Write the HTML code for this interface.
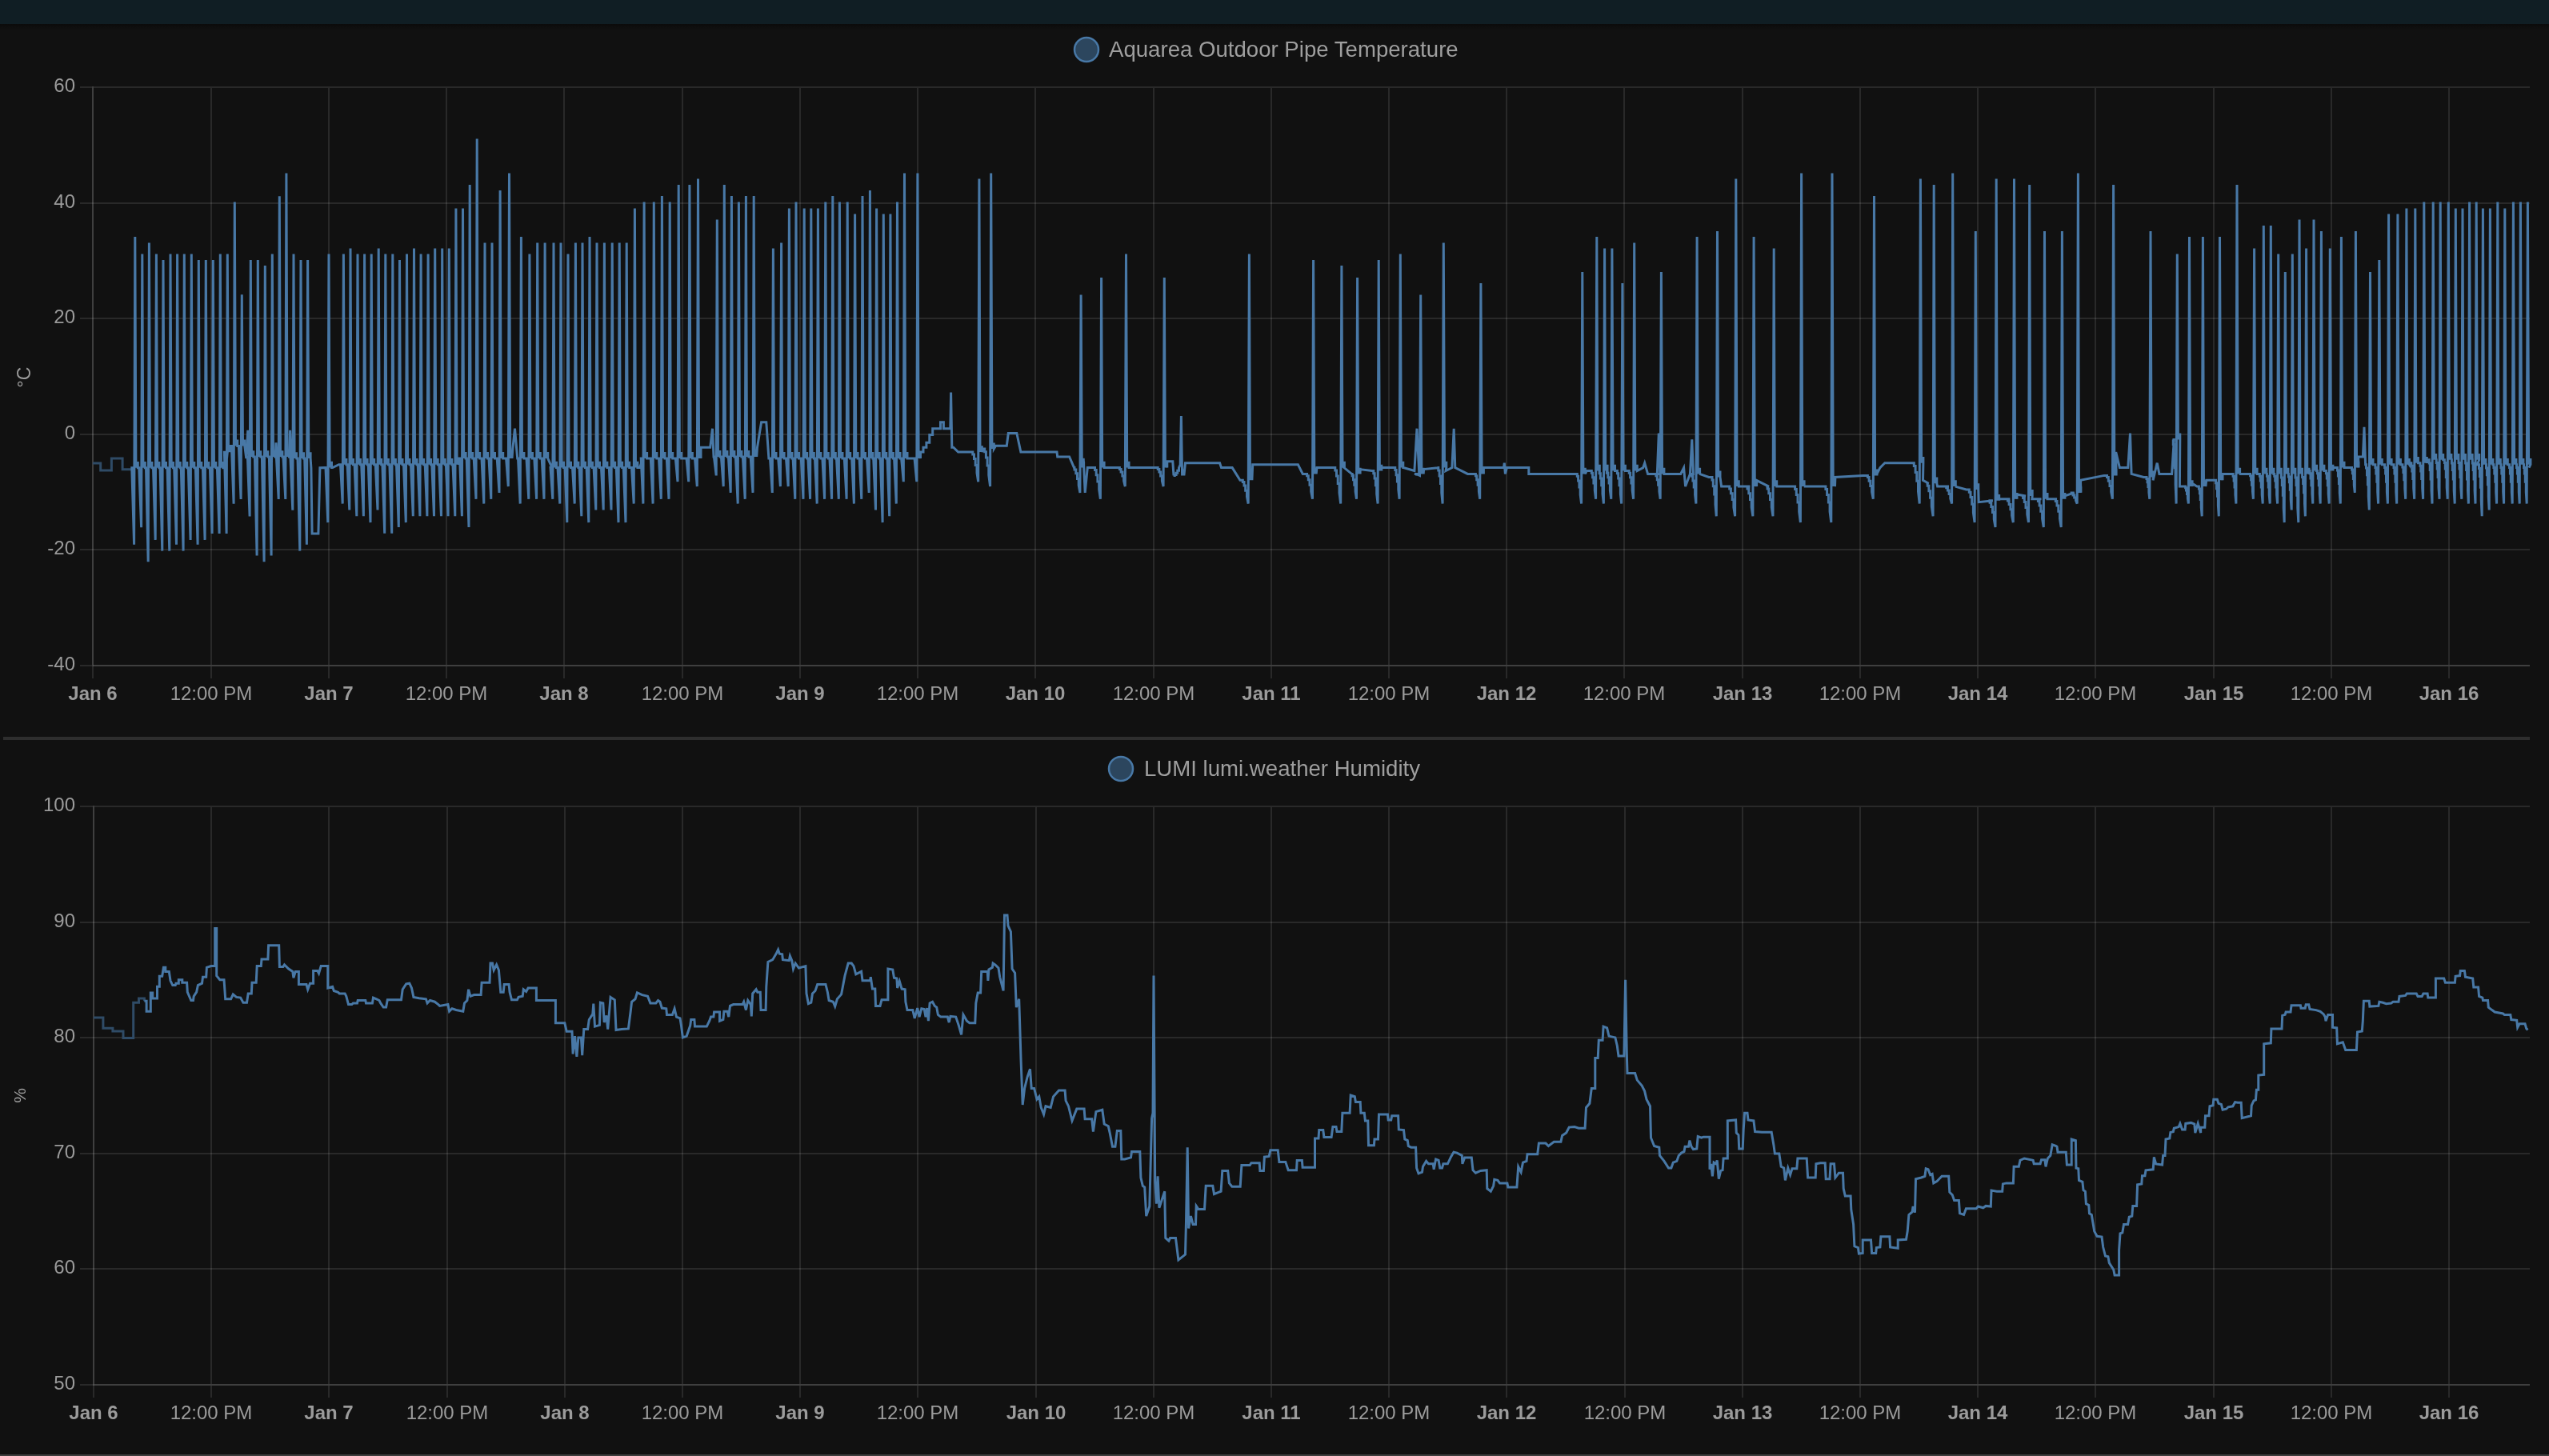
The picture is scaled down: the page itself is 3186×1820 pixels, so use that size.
<!DOCTYPE html>
<html><head><meta charset="utf-8"><style>
html,body{margin:0;padding:0;background:#111111;width:3186px;height:1820px;overflow:hidden}
svg{display:block;will-change:transform}
text{font-family:"Liberation Sans",sans-serif;fill:#9b9b9b}
.yl{font-size:24px}
.xn{font-size:24px}
.xb{font-size:24px;font-weight:bold}
.tt{font-size:27.6px;fill:#9e9e9e}
</style></head><body>
<svg width="3186" height="1820" viewBox="0 0 3186 1820">
<rect x="0" y="0" width="3186" height="1820" fill="#111111"/>
<defs><linearGradient id="sh" x1="0" y1="0" x2="0" y2="1"><stop offset="0" stop-color="#0b0b0b"/><stop offset="1" stop-color="#111111"/></linearGradient></defs>
<rect x="0" y="30" width="3186" height="8" fill="url(#sh)"/>
<rect x="0" y="0" width="3186" height="30" fill="#101e24"/>
<rect x="100" y="108" width="3062" height="2" fill="rgba(225,225,225,0.12)"/>
<text x="94" y="115.0" text-anchor="end" class="yl">60</text>
<rect x="100" y="253" width="3062" height="2" fill="rgba(225,225,225,0.12)"/>
<text x="94" y="260.0" text-anchor="end" class="yl">40</text>
<rect x="100" y="397" width="3062" height="2" fill="rgba(225,225,225,0.12)"/>
<text x="94" y="404.0" text-anchor="end" class="yl">20</text>
<rect x="100" y="542" width="3062" height="2" fill="rgba(225,225,225,0.12)"/>
<text x="94" y="549.0" text-anchor="end" class="yl">0</text>
<rect x="100" y="686" width="3062" height="2" fill="rgba(225,225,225,0.12)"/>
<text x="94" y="693.0" text-anchor="end" class="yl">-20</text>
<rect x="100" y="831" width="3062" height="2" fill="rgba(225,225,225,0.12)"/>
<rect x="116" y="831" width="3046" height="2" fill="rgba(225,225,225,0.12)"/>
<text x="94" y="838.0" text-anchor="end" class="yl">-40</text>
<rect x="115" y="110" width="2" height="721" fill="rgba(225,225,225,0.12)"/>
<rect x="115" y="833" width="2" height="15" fill="rgba(225,225,225,0.12)"/>
<rect x="115" y="108" width="2" height="725" fill="rgba(225,225,225,0.12)"/>
<text x="116.00" y="875.0" text-anchor="middle" class="xb">Jan 6</text>
<rect x="263" y="110" width="2" height="721" fill="rgba(225,225,225,0.12)"/>
<rect x="263" y="833" width="2" height="15" fill="rgba(225,225,225,0.12)"/>
<text x="264.00" y="875.0" text-anchor="middle" class="xn">12:00 PM</text>
<rect x="410" y="110" width="2" height="721" fill="rgba(225,225,225,0.12)"/>
<rect x="410" y="833" width="2" height="15" fill="rgba(225,225,225,0.12)"/>
<text x="411.00" y="875.0" text-anchor="middle" class="xb">Jan 7</text>
<rect x="557" y="110" width="2" height="721" fill="rgba(225,225,225,0.12)"/>
<rect x="557" y="833" width="2" height="15" fill="rgba(225,225,225,0.12)"/>
<text x="558.00" y="875.0" text-anchor="middle" class="xn">12:00 PM</text>
<rect x="704" y="110" width="2" height="721" fill="rgba(225,225,225,0.12)"/>
<rect x="704" y="833" width="2" height="15" fill="rgba(225,225,225,0.12)"/>
<text x="705.00" y="875.0" text-anchor="middle" class="xb">Jan 8</text>
<rect x="852" y="110" width="2" height="721" fill="rgba(225,225,225,0.12)"/>
<rect x="852" y="833" width="2" height="15" fill="rgba(225,225,225,0.12)"/>
<text x="853.00" y="875.0" text-anchor="middle" class="xn">12:00 PM</text>
<rect x="999" y="110" width="2" height="721" fill="rgba(225,225,225,0.12)"/>
<rect x="999" y="833" width="2" height="15" fill="rgba(225,225,225,0.12)"/>
<text x="1000.00" y="875.0" text-anchor="middle" class="xb">Jan 9</text>
<rect x="1146" y="110" width="2" height="721" fill="rgba(225,225,225,0.12)"/>
<rect x="1146" y="833" width="2" height="15" fill="rgba(225,225,225,0.12)"/>
<text x="1147.00" y="875.0" text-anchor="middle" class="xn">12:00 PM</text>
<rect x="1293" y="110" width="2" height="721" fill="rgba(225,225,225,0.12)"/>
<rect x="1293" y="833" width="2" height="15" fill="rgba(225,225,225,0.12)"/>
<text x="1294.00" y="875.0" text-anchor="middle" class="xb">Jan 10</text>
<rect x="1441" y="110" width="2" height="721" fill="rgba(225,225,225,0.12)"/>
<rect x="1441" y="833" width="2" height="15" fill="rgba(225,225,225,0.12)"/>
<text x="1442.00" y="875.0" text-anchor="middle" class="xn">12:00 PM</text>
<rect x="1588" y="110" width="2" height="721" fill="rgba(225,225,225,0.12)"/>
<rect x="1588" y="833" width="2" height="15" fill="rgba(225,225,225,0.12)"/>
<text x="1589.00" y="875.0" text-anchor="middle" class="xb">Jan 11</text>
<rect x="1735" y="110" width="2" height="721" fill="rgba(225,225,225,0.12)"/>
<rect x="1735" y="833" width="2" height="15" fill="rgba(225,225,225,0.12)"/>
<text x="1736.00" y="875.0" text-anchor="middle" class="xn">12:00 PM</text>
<rect x="1882" y="110" width="2" height="721" fill="rgba(225,225,225,0.12)"/>
<rect x="1882" y="833" width="2" height="15" fill="rgba(225,225,225,0.12)"/>
<text x="1883.00" y="875.0" text-anchor="middle" class="xb">Jan 12</text>
<rect x="2029" y="110" width="2" height="721" fill="rgba(225,225,225,0.12)"/>
<rect x="2029" y="833" width="2" height="15" fill="rgba(225,225,225,0.12)"/>
<text x="2030.00" y="875.0" text-anchor="middle" class="xn">12:00 PM</text>
<rect x="2177" y="110" width="2" height="721" fill="rgba(225,225,225,0.12)"/>
<rect x="2177" y="833" width="2" height="15" fill="rgba(225,225,225,0.12)"/>
<text x="2178.00" y="875.0" text-anchor="middle" class="xb">Jan 13</text>
<rect x="2324" y="110" width="2" height="721" fill="rgba(225,225,225,0.12)"/>
<rect x="2324" y="833" width="2" height="15" fill="rgba(225,225,225,0.12)"/>
<text x="2325.00" y="875.0" text-anchor="middle" class="xn">12:00 PM</text>
<rect x="2471" y="110" width="2" height="721" fill="rgba(225,225,225,0.12)"/>
<rect x="2471" y="833" width="2" height="15" fill="rgba(225,225,225,0.12)"/>
<text x="2472.00" y="875.0" text-anchor="middle" class="xb">Jan 14</text>
<rect x="2618" y="110" width="2" height="721" fill="rgba(225,225,225,0.12)"/>
<rect x="2618" y="833" width="2" height="15" fill="rgba(225,225,225,0.12)"/>
<text x="2619.00" y="875.0" text-anchor="middle" class="xn">12:00 PM</text>
<rect x="2766" y="110" width="2" height="721" fill="rgba(225,225,225,0.12)"/>
<rect x="2766" y="833" width="2" height="15" fill="rgba(225,225,225,0.12)"/>
<text x="2767.00" y="875.0" text-anchor="middle" class="xb">Jan 15</text>
<rect x="2913" y="110" width="2" height="721" fill="rgba(225,225,225,0.12)"/>
<rect x="2913" y="833" width="2" height="15" fill="rgba(225,225,225,0.12)"/>
<text x="2914.00" y="875.0" text-anchor="middle" class="xn">12:00 PM</text>
<rect x="3060" y="110" width="2" height="721" fill="rgba(225,225,225,0.12)"/>
<rect x="3060" y="833" width="2" height="15" fill="rgba(225,225,225,0.12)"/>
<text x="3061.00" y="875.0" text-anchor="middle" class="xb">Jan 16</text>
<text transform="translate(38,471.5) rotate(-90)" text-anchor="middle" class="yl" style="font-size:23px">°C</text>
<circle cx="1358" cy="62" r="15" fill="#2c465e" stroke="#4878a6" stroke-width="2.5"/>
<text x="1386" y="71" class="tt">Aquarea Outdoor Pipe Temperature</text>
<rect x="4" y="921" width="3158" height="4" fill="#2e2e2e"/>
<rect x="100" y="1007" width="3062" height="2" fill="rgba(225,225,225,0.12)"/>
<text x="94" y="1014.0" text-anchor="end" class="yl">100</text>
<rect x="100" y="1152" width="3062" height="2" fill="rgba(225,225,225,0.12)"/>
<text x="94" y="1159.0" text-anchor="end" class="yl">90</text>
<rect x="100" y="1296" width="3062" height="2" fill="rgba(225,225,225,0.12)"/>
<text x="94" y="1303.0" text-anchor="end" class="yl">80</text>
<rect x="100" y="1441" width="3062" height="2" fill="rgba(225,225,225,0.12)"/>
<text x="94" y="1448.0" text-anchor="end" class="yl">70</text>
<rect x="100" y="1585" width="3062" height="2" fill="rgba(225,225,225,0.12)"/>
<text x="94" y="1592.0" text-anchor="end" class="yl">60</text>
<rect x="100" y="1730" width="3062" height="2" fill="rgba(225,225,225,0.12)"/>
<rect x="116" y="1730" width="3046" height="2" fill="rgba(225,225,225,0.12)"/>
<text x="94" y="1737.0" text-anchor="end" class="yl">50</text>
<rect x="116" y="1009" width="2" height="721" fill="rgba(225,225,225,0.12)"/>
<rect x="116" y="1732" width="2" height="15" fill="rgba(225,225,225,0.12)"/>
<rect x="116" y="1007" width="2" height="725" fill="rgba(225,225,225,0.12)"/>
<text x="117.00" y="1774.0" text-anchor="middle" class="xb">Jan 6</text>
<rect x="263" y="1009" width="2" height="721" fill="rgba(225,225,225,0.12)"/>
<rect x="263" y="1732" width="2" height="15" fill="rgba(225,225,225,0.12)"/>
<text x="264.00" y="1774.0" text-anchor="middle" class="xn">12:00 PM</text>
<rect x="410" y="1009" width="2" height="721" fill="rgba(225,225,225,0.12)"/>
<rect x="410" y="1732" width="2" height="15" fill="rgba(225,225,225,0.12)"/>
<text x="411.00" y="1774.0" text-anchor="middle" class="xb">Jan 7</text>
<rect x="558" y="1009" width="2" height="721" fill="rgba(225,225,225,0.12)"/>
<rect x="558" y="1732" width="2" height="15" fill="rgba(225,225,225,0.12)"/>
<text x="559.00" y="1774.0" text-anchor="middle" class="xn">12:00 PM</text>
<rect x="705" y="1009" width="2" height="721" fill="rgba(225,225,225,0.12)"/>
<rect x="705" y="1732" width="2" height="15" fill="rgba(225,225,225,0.12)"/>
<text x="706.00" y="1774.0" text-anchor="middle" class="xb">Jan 8</text>
<rect x="852" y="1009" width="2" height="721" fill="rgba(225,225,225,0.12)"/>
<rect x="852" y="1732" width="2" height="15" fill="rgba(225,225,225,0.12)"/>
<text x="853.00" y="1774.0" text-anchor="middle" class="xn">12:00 PM</text>
<rect x="999" y="1009" width="2" height="721" fill="rgba(225,225,225,0.12)"/>
<rect x="999" y="1732" width="2" height="15" fill="rgba(225,225,225,0.12)"/>
<text x="1000.00" y="1774.0" text-anchor="middle" class="xb">Jan 9</text>
<rect x="1146" y="1009" width="2" height="721" fill="rgba(225,225,225,0.12)"/>
<rect x="1146" y="1732" width="2" height="15" fill="rgba(225,225,225,0.12)"/>
<text x="1147.00" y="1774.0" text-anchor="middle" class="xn">12:00 PM</text>
<rect x="1294" y="1009" width="2" height="721" fill="rgba(225,225,225,0.12)"/>
<rect x="1294" y="1732" width="2" height="15" fill="rgba(225,225,225,0.12)"/>
<text x="1295.00" y="1774.0" text-anchor="middle" class="xb">Jan 10</text>
<rect x="1441" y="1009" width="2" height="721" fill="rgba(225,225,225,0.12)"/>
<rect x="1441" y="1732" width="2" height="15" fill="rgba(225,225,225,0.12)"/>
<text x="1442.00" y="1774.0" text-anchor="middle" class="xn">12:00 PM</text>
<rect x="1588" y="1009" width="2" height="721" fill="rgba(225,225,225,0.12)"/>
<rect x="1588" y="1732" width="2" height="15" fill="rgba(225,225,225,0.12)"/>
<text x="1589.00" y="1774.0" text-anchor="middle" class="xb">Jan 11</text>
<rect x="1735" y="1009" width="2" height="721" fill="rgba(225,225,225,0.12)"/>
<rect x="1735" y="1732" width="2" height="15" fill="rgba(225,225,225,0.12)"/>
<text x="1736.00" y="1774.0" text-anchor="middle" class="xn">12:00 PM</text>
<rect x="1882" y="1009" width="2" height="721" fill="rgba(225,225,225,0.12)"/>
<rect x="1882" y="1732" width="2" height="15" fill="rgba(225,225,225,0.12)"/>
<text x="1883.00" y="1774.0" text-anchor="middle" class="xb">Jan 12</text>
<rect x="2030" y="1009" width="2" height="721" fill="rgba(225,225,225,0.12)"/>
<rect x="2030" y="1732" width="2" height="15" fill="rgba(225,225,225,0.12)"/>
<text x="2031.00" y="1774.0" text-anchor="middle" class="xn">12:00 PM</text>
<rect x="2177" y="1009" width="2" height="721" fill="rgba(225,225,225,0.12)"/>
<rect x="2177" y="1732" width="2" height="15" fill="rgba(225,225,225,0.12)"/>
<text x="2178.00" y="1774.0" text-anchor="middle" class="xb">Jan 13</text>
<rect x="2324" y="1009" width="2" height="721" fill="rgba(225,225,225,0.12)"/>
<rect x="2324" y="1732" width="2" height="15" fill="rgba(225,225,225,0.12)"/>
<text x="2325.00" y="1774.0" text-anchor="middle" class="xn">12:00 PM</text>
<rect x="2471" y="1009" width="2" height="721" fill="rgba(225,225,225,0.12)"/>
<rect x="2471" y="1732" width="2" height="15" fill="rgba(225,225,225,0.12)"/>
<text x="2472.00" y="1774.0" text-anchor="middle" class="xb">Jan 14</text>
<rect x="2618" y="1009" width="2" height="721" fill="rgba(225,225,225,0.12)"/>
<rect x="2618" y="1732" width="2" height="15" fill="rgba(225,225,225,0.12)"/>
<text x="2619.00" y="1774.0" text-anchor="middle" class="xn">12:00 PM</text>
<rect x="2766" y="1009" width="2" height="721" fill="rgba(225,225,225,0.12)"/>
<rect x="2766" y="1732" width="2" height="15" fill="rgba(225,225,225,0.12)"/>
<text x="2767.00" y="1774.0" text-anchor="middle" class="xb">Jan 15</text>
<rect x="2913" y="1009" width="2" height="721" fill="rgba(225,225,225,0.12)"/>
<rect x="2913" y="1732" width="2" height="15" fill="rgba(225,225,225,0.12)"/>
<text x="2914.00" y="1774.0" text-anchor="middle" class="xn">12:00 PM</text>
<rect x="3060" y="1009" width="2" height="721" fill="rgba(225,225,225,0.12)"/>
<rect x="3060" y="1732" width="2" height="15" fill="rgba(225,225,225,0.12)"/>
<text x="3061.00" y="1774.0" text-anchor="middle" class="xb">Jan 16</text>
<text transform="translate(32,1369.5) rotate(-90)" text-anchor="middle" class="yl" style="font-size:21px">%</text>
<circle cx="1401" cy="961" r="15" fill="#2c465e" stroke="#4878a6" stroke-width="2.5"/>
<text x="1430" y="970" class="tt">LUMI lumi.weather Humidity</text>
<rect x="0" y="1818" width="3186" height="2" fill="#3d3d3d"/>
<path d="M115.9 578.9 L125.7 578.9 L125.7 587.9 L139.4 587.9 L139.4 573.0 L153.1 573.0 L153.1 586.7 L164.8 586.7" fill="none" stroke="#2f4b66" stroke-width="3" stroke-linejoin="miter"/>
<path d="M164.8 586.7 L166.0 584.8 L164.8 584.8 L167.6 680.7 L168.8 296.1 L169.9 584.8 L169.9 578.5 L172.3 578.5 L172.3 584.8 L173.8 584.8 L176.6 659.2 L177.8 317.6 L178.9 584.8 L178.9 578.5 L181.3 578.5 L181.3 584.8 L182.5 584.8 L185.2 702.3 L186.4 303.5 L187.6 584.8 L187.6 578.5 L189.9 578.5 L189.9 584.8 L191.5 584.8 L194.2 674.9 L195.4 317.6 L196.6 584.8 L196.6 578.5 L198.9 578.5 L198.9 584.8 L200.1 584.8 L202.8 688.6 L204.0 325.1 L205.2 584.8 L205.2 578.5 L207.5 578.5 L207.5 584.8 L209.1 584.8 L211.8 688.6 L213.0 317.6 L214.2 584.8 L214.2 578.5 L216.5 578.5 L216.5 584.8 L217.7 584.8 L220.5 680.7 L221.6 317.6 L222.8 584.8 L222.8 578.5 L225.2 578.5 L225.2 584.8 L226.3 584.8 L229.1 688.6 L230.3 317.6 L231.4 584.8 L231.4 578.5 L233.8 578.5 L233.8 584.8 L235.3 584.8 L238.1 674.9 L239.3 317.6 L240.4 584.8 L240.4 578.5 L242.8 578.5 L242.8 584.8 L244.4 584.8 L247.1 680.7 L248.3 325.1 L249.4 584.8 L249.4 578.5 L251.8 578.5 L251.8 584.8 L253.4 584.8 L256.1 674.9 L257.3 325.1 L258.5 584.8 L258.5 578.5 L260.8 578.5 L260.8 584.8 L262.4 584.8 L265.1 667.0 L266.3 325.1 L267.5 584.8 L267.5 578.5 L269.8 578.5 L269.8 584.8 L271.4 584.8 L274.1 667.0 L275.3 317.6 L276.5 584.8 L276.5 578.5 L278.8 578.5 L278.8 584.8 L282.3 584.8 L284.3 565.2 L280.4 565.2 L283.1 667.0 L284.3 317.6 L285.5 565.2 L285.5 558.9 L287.8 558.9 L287.8 565.2 L288.2 557.4 L289.4 557.4 L292.1 629.8 L293.3 252.6 L294.5 557.4 L294.5 551.1 L296.8 551.1 L296.8 557.4 L298.4 557.4 L301.1 624.0 L302.3 368.2 L303.5 557.4 L303.5 551.1 L305.8 551.1 L305.8 557.4 L307.8 573.0 L309.8 537.8 L311.3 571.1 L309.4 571.1 L312.1 645.5 L313.3 325.1 L314.5 571.1 L314.5 564.8 L316.8 564.8 L316.8 571.1 L318.4 571.1 L321.1 694.5 L322.3 325.1 L323.5 571.1 L323.5 564.8 L325.8 564.8 L325.8 571.1 L327.4 571.1 L330.1 702.3 L331.3 332.1 L332.5 571.1 L332.5 564.8 L334.8 564.8 L334.8 571.1 L336.4 571.1 L339.1 694.5 L340.3 317.6 L341.5 571.1 L341.5 564.8 L343.8 564.8 L343.8 571.1 L344.2 571.1 L345.0 553.4 L346.2 571.1 L345.4 571.1 L348.2 624.0 L349.3 245.2 L350.5 571.1 L350.5 564.8 L352.9 564.8 L352.9 571.1 L354.0 571.1 L356.8 624.0 L357.9 216.6 L359.1 571.1 L359.1 564.8 L361.5 564.8 L361.5 571.1 L361.9 571.1 L362.6 537.8 L364.2 573.0 L363.0 573.0 L365.8 637.7 L367.0 317.6 L368.1 573.0 L368.1 566.8 L370.5 566.8 L370.5 573.0 L369.3 573.0 L372.0 573.0 L374.8 688.6 L376.0 325.1 L377.1 573.0 L377.1 566.8 L379.5 566.8 L379.5 573.0 L380.7 573.0 L383.4 680.7 L384.6 325.1 L385.8 573.0 L385.8 566.8 L388.1 566.8 L388.1 573.0 L388.9 584.8 L390.1 667.0 L397.9 667.0 L399.9 584.8 L405.9 584.6 L407.0 584.6 L409.8 653.1 L411.0 317.6 L412.1 584.6 L412.1 578.3 L414.5 578.3 L414.5 584.6 L415.7 584.6 L423.5 580.7 L425.5 580.7 L428.2 629.6 L429.4 317.6 L430.5 580.7 L430.5 574.4 L432.9 574.4 L432.9 580.7 L434.1 580.7 L436.8 637.5 L438.0 310.5 L439.2 580.7 L439.2 574.4 L441.5 574.4 L441.5 580.7 L443.1 580.7 L445.8 645.3 L447.0 317.6 L448.2 580.7 L448.2 574.4 L450.5 574.4 L450.5 580.7 L451.7 580.7 L454.4 645.3 L455.6 317.6 L456.8 580.7 L456.8 574.4 L459.1 574.4 L459.1 580.7 L460.3 580.7 L463.0 653.1 L464.2 317.6 L465.4 580.7 L465.4 574.4 L467.7 574.4 L467.7 580.7 L469.3 580.7 L472.0 637.5 L473.2 310.5 L474.4 580.7 L474.4 574.4 L476.7 574.4 L476.7 580.7 L477.9 580.7 L480.7 666.8 L481.8 317.6 L483.0 580.7 L483.0 574.4 L485.4 574.4 L485.4 580.7 L486.9 580.7 L489.7 666.8 L490.8 317.6 L492.0 580.7 L492.0 574.4 L494.4 574.4 L494.4 580.7 L495.5 580.7 L498.3 659.0 L499.5 325.0 L500.6 580.7 L500.6 574.4 L503.0 574.4 L503.0 580.7 L504.5 580.7 L507.3 653.1 L508.5 317.6 L509.6 580.7 L509.6 574.4 L512.0 574.4 L512.0 580.7 L513.5 580.7 L516.3 645.3 L517.5 310.5 L518.6 580.7 L518.6 574.4 L521.0 574.4 L521.0 580.7 L522.2 580.7 L524.9 645.3 L526.1 317.6 L527.3 580.7 L527.3 574.4 L529.6 574.4 L529.6 580.7 L531.2 580.7 L533.9 645.3 L535.1 317.6 L536.3 580.7 L536.3 574.4 L538.6 574.4 L538.6 580.7 L539.8 580.7 L542.5 645.3 L543.7 310.5 L544.9 580.7 L544.9 574.4 L547.2 574.4 L547.2 580.7 L548.8 580.7 L551.5 645.3 L552.7 310.5 L553.9 580.7 L553.9 574.4 L556.2 574.4 L556.2 580.7 L557.4 580.7 L560.1 645.3 L561.3 310.5 L562.5 580.7 L562.5 574.4 L564.8 574.4 L564.8 580.7 L566.0 580.7 L568.8 645.3 L569.9 260.4 L571.1 580.7 L571.1 574.4 L573.5 574.4 L573.5 580.7 L572.3 572.9 L574.6 572.9 L577.4 645.3 L578.5 260.4 L579.7 572.9 L579.7 566.6 L582.1 566.6 L582.1 572.9 L583.2 572.9 L586.0 659.0 L587.2 231.0 L588.3 572.9 L588.3 566.6 L590.7 566.6 L590.7 572.9 L592.2 572.9 L595.0 623.8 L596.2 173.5 L597.3 572.9 L597.3 566.6 L599.7 566.6 L599.7 572.9 L602.0 572.9 L604.8 629.6 L606.0 303.5 L607.1 572.9 L607.1 566.6 L609.5 566.6 L609.5 572.9 L611.0 572.9 L613.8 623.8 L615.0 303.5 L616.1 572.9 L616.1 566.6 L618.5 566.6 L618.5 572.9 L621.2 572.9 L624.0 615.9 L625.1 238.1 L626.3 572.9 L626.3 566.6 L628.7 566.6 L628.7 572.9 L632.6 572.9 L635.3 608.1 L636.5 216.6 L637.7 572.9 L637.7 566.6 L640.0 566.6 L640.0 572.9 L640.8 561.1 L643.5 535.7 L646.7 572.9 L647.5 572.9 L650.2 629.6 L651.4 296.0 L652.5 572.9 L652.5 566.6 L654.9 566.6 L654.9 572.9 L658.0 572.9 L660.8 623.8 L661.9 317.6 L663.1 572.9 L663.1 566.6 L665.5 566.6 L665.5 572.9 L667.8 572.9 L670.6 623.8 L671.7 303.5 L672.9 572.9 L672.9 566.6 L675.3 566.6 L675.3 572.9 L677.2 572.9 L680.0 623.8 L681.1 303.5 L682.3 572.9 L682.3 566.6 L684.7 566.6 L684.7 572.9 L690.0 584.6 L688.0 584.6 L690.8 623.8 L692.0 303.5 L693.1 584.6 L693.1 578.3 L695.5 578.3 L695.5 584.6 L697.0 584.6 L699.8 629.6 L701.0 303.5 L702.1 584.6 L702.1 578.3 L704.5 578.3 L704.5 584.6 L706.1 584.6 L708.8 653.1 L710.0 317.6 L711.1 584.6 L711.1 578.3 L713.5 578.3 L713.5 584.6 L715.5 584.6 L718.2 629.6 L719.4 303.5 L720.5 584.6 L720.5 578.3 L722.9 578.3 L722.9 584.6 L724.1 584.6 L726.8 645.3 L728.0 303.5 L729.2 584.6 L729.2 578.3 L731.5 578.3 L731.5 584.6 L733.1 584.6 L735.8 653.1 L737.0 296.0 L738.2 584.6 L738.2 578.3 L740.5 578.3 L740.5 584.6 L742.1 584.6 L744.8 637.5 L746.0 303.5 L747.2 584.6 L747.2 578.3 L749.5 578.3 L749.5 584.6 L751.5 584.6 L754.2 637.5 L755.4 303.5 L756.6 584.6 L756.6 578.3 L758.9 578.3 L758.9 584.6 L761.3 584.6 L764.0 637.5 L765.2 303.5 L766.4 584.6 L766.4 578.3 L768.7 578.3 L768.7 584.6 L770.3 584.6 L773.0 653.1 L774.2 303.5 L775.4 584.6 L775.4 578.3 L777.7 578.3 L777.7 584.6 L779.3 584.6 L782.0 653.1 L783.2 303.5 L784.4 584.6 L784.4 578.3 L786.7 578.3 L786.7 584.6 L789.5 584.6 L792.2 629.6 L793.4 260.4 L794.5 584.6 L794.5 578.3 L796.9 578.3 L796.9 584.6 L799.6 584.6 L803.5 572.9 L801.2 572.9 L803.9 629.6 L805.1 252.6 L806.3 572.9 L806.3 566.6 L808.6 566.6 L808.6 572.9 L813.3 572.9 L816.1 629.6 L817.3 252.6 L818.4 572.9 L818.4 566.6 L820.8 566.6 L820.8 572.9 L823.5 572.9 L826.3 623.8 L827.4 245.1 L828.6 572.9 L828.6 566.6 L831.0 566.6 L831.0 572.9 L833.3 572.9 L836.0 623.8 L837.2 252.6 L838.4 572.9 L838.4 566.6 L840.7 566.6 L840.7 572.9 L844.3 572.9 L847.0 602.2 L848.2 231.0 L849.4 572.9 L849.4 566.6 L851.7 566.6 L851.7 572.9 L858.0 572.9 L860.7 602.2 L861.9 231.0 L863.1 572.9 L863.1 566.6 L865.4 566.6 L865.4 572.9 L868.5 572.9 L871.3 608.1 L872.5 223.6 L873.6 572.9 L873.6 566.6 L876.0 566.6 L876.0 572.9 L876.0 559.2 L887.7 559.2 L890.5 535.7 L892.0 570.9 L892.4 570.9 L895.2 594.4 L896.3 274.5 L897.5 570.9 L897.5 564.6 L899.9 564.6 L899.9 570.9 L901.4 570.9 L904.2 608.1 L905.3 231.0 L906.5 570.9 L906.5 564.6 L908.9 564.6 L908.9 570.9 L910.4 570.9 L913.2 615.9 L914.4 245.1 L915.5 570.9 L915.5 564.6 L917.9 564.6 L917.9 570.9 L919.4 570.9 L922.2 629.6 L923.4 252.6 L924.5 570.9 L924.5 564.6 L926.9 564.6 L926.9 570.9 L928.4 570.9 L931.2 623.8 L932.4 245.1 L933.5 570.9 L933.5 564.6 L935.9 564.6 L935.9 570.9 L938.2 570.9 L941.0 615.9 L942.2 245.1 L943.3 570.9 L943.3 564.6 L945.7 564.6 L945.7 570.9 L946.5 559.2 L951.6 527.8 L957.8 527.8 L960.9 572.9 L962.5 572.9 L965.3 615.9 L966.4 310.5 L967.6 572.9 L967.6 566.6 L970.0 566.6 L970.0 572.9 L972.7 572.9 L975.4 608.1 L976.6 303.5 L977.8 572.9 L977.8 566.6 L980.1 566.6 L980.1 572.9 L982.5 572.9 L985.2 608.1 L986.4 260.4 L987.6 572.9 L987.6 566.6 L989.9 566.6 L989.9 572.9 L991.1 572.9 L993.8 623.8 L995.0 252.6 L996.2 572.9 L996.2 566.6 L998.5 566.6 L998.5 572.9 L1001.3 572.9 L1004.0 623.8 L1005.2 260.4 L1006.4 572.9 L1006.4 566.6 L1008.7 566.6 L1008.7 572.9 L1009.9 572.9 L1012.6 623.8 L1013.8 260.4 L1015.0 572.9 L1015.0 566.6 L1017.3 566.6 L1017.3 572.9 L1018.5 572.9 L1021.2 629.6 L1022.4 260.4 L1023.6 572.9 L1023.6 566.6 L1025.9 566.6 L1025.9 572.9 L1027.9 572.9 L1030.6 623.8 L1031.8 252.6 L1033.0 572.9 L1033.0 566.6 L1035.3 566.6 L1035.3 572.9 L1036.9 572.9 L1039.6 623.8 L1040.8 245.1 L1042.0 572.9 L1042.0 566.6 L1044.3 566.6 L1044.3 572.9 L1045.5 572.9 L1048.3 623.8 L1049.4 252.6 L1050.6 572.9 L1050.6 566.6 L1053.0 566.6 L1053.0 572.9 L1055.3 572.9 L1058.1 623.8 L1059.2 252.6 L1060.4 572.9 L1060.4 566.6 L1062.7 566.6 L1062.7 572.9 L1064.7 572.9 L1067.4 629.6 L1068.6 267.5 L1069.8 572.9 L1069.8 566.6 L1072.1 566.6 L1072.1 572.9 L1074.1 572.9 L1076.8 623.8 L1078.0 245.1 L1079.2 572.9 L1079.2 566.6 L1081.5 566.6 L1081.5 572.9 L1083.5 572.9 L1086.2 615.9 L1087.4 238.1 L1088.6 572.9 L1088.6 566.6 L1090.9 566.6 L1090.9 572.9 L1091.7 572.9 L1094.5 637.5 L1095.6 260.4 L1096.8 572.9 L1096.8 566.6 L1099.2 566.6 L1099.2 572.9 L1100.3 572.9 L1103.1 653.1 L1104.3 267.5 L1105.4 572.9 L1105.4 566.6 L1107.8 566.6 L1107.8 572.9 L1109.0 572.9 L1111.7 645.3 L1112.9 267.5 L1114.0 572.9 L1114.0 566.6 L1116.4 566.6 L1116.4 572.9 L1117.6 572.9 L1120.3 629.6 L1121.5 252.6 L1122.7 572.9 L1122.7 566.6 L1125.0 566.6 L1125.0 572.9 L1126.6 572.9 L1129.3 602.2 L1130.5 216.6 L1131.7 572.9 L1131.7 566.6 L1134.0 566.6 L1134.0 572.9 L1143.0 572.9 L1145.8 602.2 L1146.9 216.6 L1148.1 572.9 L1148.1 566.6 L1150.5 566.6 L1150.5 572.9 L1148.9 565.0 L1154.0 565.0 L1154.0 559.2 L1157.9 559.2 L1157.9 553.3 L1161.8 553.3 L1161.8 543.5 L1165.7 543.5 L1165.7 535.7 L1175.5 535.7 L1175.5 527.8 L1179.4 527.8 L1179.4 535.7 L1187.8 535.7 L1188.6 490.6 L1189.8 559.2 L1191.7 559.2 L1197.6 565.0 L1217.2 565.0 L1214.1 565.0 L1215.8 565.0 L1215.8 567.9 L1217.5 567.9 L1217.5 573.6 L1219.2 573.6 L1219.2 581.5 L1221.0 581.5 L1221.0 591.1 L1222.7 602.2 L1223.9 223.6 L1225.0 565.0 L1225.0 558.8 L1227.4 558.8 L1227.4 565.0 L1228.9 561.1 L1228.9 561.1 L1230.7 561.1 L1230.7 564.7 L1232.4 564.7 L1232.4 572.0 L1234.1 572.0 L1234.1 581.9 L1235.8 581.9 L1235.8 594.0 L1237.6 608.1 L1238.7 216.6 L1239.9 561.1 L1239.9 554.9 L1242.3 554.9 L1242.3 561.1 L1244.6 557.2 L1258.3 557.2 L1260.3 541.5 L1270.8 541.5 L1275.9 565.0 L1321.0 565.0 L1321.7 570.9 L1336.6 570.9 L1342.5 584.6 L1341.3 584.6 L1343.0 584.6 L1343.0 587.0 L1344.8 587.0 L1344.8 591.8 L1346.5 591.8 L1346.5 598.4 L1348.2 598.4 L1348.2 606.5 L1349.9 615.9 L1351.1 368.5 L1352.3 584.6 L1352.3 578.3 L1354.6 578.3 L1354.6 584.6 L1354.2 572.9 L1356.2 615.9 L1359.3 584.6 L1367.9 584.6 L1366.8 584.6 L1368.5 584.6 L1368.5 587.6 L1370.2 587.6 L1370.2 593.7 L1371.9 593.7 L1371.9 601.9 L1373.7 601.9 L1373.7 612.0 L1375.4 623.8 L1376.6 346.9 L1377.7 584.6 L1377.7 578.3 L1380.1 578.3 L1380.1 584.6 L1381.6 584.6 L1397.3 584.6 L1397.7 584.6 L1399.4 584.6 L1399.4 586.4 L1401.1 586.4 L1401.1 590.0 L1402.9 590.0 L1402.9 595.0 L1404.6 595.0 L1404.6 601.1 L1406.3 608.1 L1407.5 317.6 L1408.7 584.6 L1408.7 578.3 L1411.0 578.3 L1411.0 584.6 L1411.0 584.6 L1442.3 584.6 L1445.5 584.6 L1447.2 584.6 L1447.2 586.4 L1448.9 586.4 L1448.9 590.0 L1450.6 590.0 L1450.6 595.0 L1452.4 595.0 L1452.4 601.1 L1454.1 608.1 L1455.3 346.9 L1456.4 584.6 L1456.4 578.3 L1458.8 578.3 L1458.8 584.6 L1458.0 576.8 L1465.8 576.8 L1467.0 594.4 L1466.6 594.4 L1468.3 594.4 L1468.3 593.4 L1470.1 593.4 L1470.1 591.2 L1471.8 591.2 L1471.8 588.3 L1473.5 588.3 L1473.5 584.8 L1475.2 580.7 L1476.4 520.0 L1477.6 594.4 L1477.6 588.1 L1479.9 588.1 L1479.9 594.4 L1481.5 578.7 L1524.6 578.7 L1526.5 584.6 L1540.2 584.6 L1550.0 600.3 L1551.6 600.3 L1553.3 600.3 L1553.3 602.5 L1555.0 602.5 L1555.0 607.1 L1556.7 607.1 L1556.7 613.2 L1558.5 613.2 L1558.5 620.8 L1560.2 629.6 L1561.4 317.6 L1562.5 600.3 L1562.5 594.0 L1564.9 594.0 L1564.9 600.3 L1565.7 580.7 L1622.4 580.7 L1628.3 592.4 L1631.8 592.4 L1633.6 592.4 L1633.6 594.8 L1635.3 594.8 L1635.3 599.7 L1637.0 599.7 L1637.0 606.3 L1638.7 606.3 L1638.7 614.4 L1640.5 623.8 L1641.6 325.0 L1642.8 592.4 L1642.8 586.2 L1645.2 586.2 L1645.2 592.4 L1645.9 584.6 L1665.5 584.6 L1667.1 584.6 L1668.8 584.6 L1668.8 588.0 L1670.5 588.0 L1670.5 595.0 L1672.2 595.0 L1672.2 604.5 L1674.0 604.5 L1674.0 616.1 L1675.7 629.6 L1676.9 332.1 L1678.0 584.6 L1678.0 578.3 L1680.4 578.3 L1680.4 584.6 L1680.0 584.6 L1689.6 592.4 L1688.8 592.4 L1690.1 592.4 L1690.1 594.8 L1691.5 594.8 L1691.5 599.7 L1692.8 599.7 L1692.8 606.3 L1694.1 606.3 L1694.1 614.4 L1695.5 623.8 L1696.6 346.9 L1697.8 592.4 L1697.8 586.2 L1700.1 586.2 L1700.1 592.4 L1699.4 586.6 L1715.0 588.5 L1715.4 588.5 L1716.8 588.5 L1716.8 591.7 L1718.1 591.7 L1718.1 598.0 L1719.4 598.0 L1719.4 606.7 L1720.7 606.7 L1720.7 617.3 L1722.1 629.6 L1723.2 325.0 L1724.4 588.5 L1724.4 582.3 L1726.8 582.3 L1726.8 588.5 L1726.8 584.6 L1740.5 584.6 L1742.4 584.6 L1743.8 584.6 L1743.8 587.6 L1745.1 587.6 L1745.1 593.7 L1746.4 593.7 L1746.4 601.9 L1747.8 601.9 L1747.8 612.0 L1749.1 623.8 L1750.3 317.6 L1751.4 584.6 L1751.4 578.3 L1753.8 578.3 L1753.8 584.6 L1754.2 584.6 L1767.9 588.5 L1771.0 535.7 L1773.8 592.4 L1767.9 592.4 L1769.2 592.4 L1769.2 592.6 L1770.5 592.6 L1770.5 592.9 L1771.9 592.9 L1771.9 593.3 L1773.2 593.3 L1773.2 593.8 L1774.5 594.4 L1775.7 368.5 L1776.9 592.4 L1776.9 586.2 L1779.2 586.2 L1779.2 592.4 L1779.6 586.6 L1799.2 584.6 L1796.5 584.6 L1797.8 584.6 L1797.8 588.0 L1799.1 588.0 L1799.1 595.0 L1800.5 595.0 L1800.5 604.5 L1801.8 604.5 L1801.8 616.1 L1803.1 629.6 L1804.3 303.5 L1805.5 584.6 L1805.5 578.3 L1807.8 578.3 L1807.8 584.6 L1807.0 588.5 L1814.9 584.6 L1817.2 535.7 L1818.8 584.6 L1834.4 592.4 L1843.1 592.4 L1844.4 592.4 L1844.4 594.8 L1845.7 594.8 L1845.7 599.7 L1847.1 599.7 L1847.1 606.3 L1848.4 606.3 L1848.4 614.4 L1849.7 623.8 L1850.9 354.0 L1852.1 592.4 L1852.1 586.2 L1854.4 586.2 L1854.4 592.4 L1854.0 584.6 L1879.5 584.6 L1880.3 578.7 L1881.4 592.4 L1883.4 584.6 L1910.8 584.6 L1910.8 592.4 L1971.5 592.4 L1969.9 592.4 L1971.3 592.4 L1971.3 595.3 L1972.6 595.3 L1972.6 601.0 L1973.9 601.0 L1973.9 608.9 L1975.2 608.9 L1975.2 618.5 L1976.6 629.6 L1977.8 339.9 L1978.9 592.4 L1978.9 586.2 L1981.3 586.2 L1981.3 592.4 L1983.2 588.5 L1987.9 588.5 L1989.3 588.5 L1989.3 591.2 L1990.6 591.2 L1990.6 596.7 L1991.9 596.7 L1991.9 604.1 L1993.3 604.1 L1993.3 613.2 L1994.6 623.8 L1995.8 296.0 L1996.9 588.5 L1996.9 582.3 L1999.3 582.3 L1999.3 588.5 L1997.7 588.5 L1999.1 588.5 L1999.1 591.7 L2000.4 591.7 L2000.4 598.0 L2001.7 598.0 L2001.7 606.7 L2003.0 606.7 L2003.0 617.3 L2004.4 629.6 L2005.6 310.5 L2006.7 588.5 L2006.7 582.3 L2009.1 582.3 L2009.1 588.5 L2007.1 588.5 L2008.4 588.5 L2008.4 591.2 L2009.8 591.2 L2009.8 596.7 L2011.1 596.7 L2011.1 604.1 L2012.4 604.1 L2012.4 613.2 L2013.8 623.8 L2014.9 310.5 L2016.1 588.5 L2016.1 582.3 L2018.5 582.3 L2018.5 588.5 L2020.0 588.5 L2021.4 588.5 L2021.4 591.7 L2022.7 591.7 L2022.7 598.0 L2024.0 598.0 L2024.0 606.7 L2025.4 606.7 L2025.4 617.3 L2026.7 629.6 L2027.9 354.0 L2029.0 588.5 L2029.0 582.3 L2031.4 582.3 L2031.4 588.5 L2034.9 588.5 L2036.2 588.5 L2036.2 591.2 L2037.6 591.2 L2037.6 596.7 L2038.9 596.7 L2038.9 604.1 L2040.2 604.1 L2040.2 613.2 L2041.6 623.8 L2042.7 303.5 L2043.9 588.5 L2043.9 582.3 L2046.3 582.3 L2046.3 588.5 L2053.7 584.6 L2055.7 578.7 L2059.6 592.4 L2071.3 592.4 L2073.3 541.5 L2074.9 592.4 L2068.6 592.4 L2069.9 592.4 L2069.9 594.8 L2071.3 594.8 L2071.3 599.7 L2072.6 599.7 L2072.6 606.3 L2073.9 606.3 L2073.9 614.4 L2075.2 623.8 L2076.4 339.9 L2077.6 592.4 L2077.6 586.2 L2079.9 586.2 L2079.9 592.4 L2081.1 592.4 L2100.7 592.4 L2104.6 584.6 L2106.6 608.1 L2112.4 592.4 L2114.8 549.4 L2116.4 592.4 L2113.2 592.4 L2114.6 592.4 L2114.6 595.3 L2115.9 595.3 L2115.9 601.0 L2117.2 601.0 L2117.2 608.9 L2118.6 608.9 L2118.6 618.5 L2119.9 629.6 L2121.1 296.0 L2122.2 592.4 L2122.2 586.2 L2124.6 586.2 L2124.6 592.4 L2124.2 592.4 L2135.9 596.4 L2138.7 596.4 L2140.0 596.4 L2140.0 600.1 L2141.3 600.1 L2141.3 607.7 L2142.7 607.7 L2142.7 618.0 L2144.0 618.0 L2144.0 630.6 L2145.3 645.3 L2146.5 289.0 L2147.7 596.4 L2147.7 590.1 L2150.0 590.1 L2150.0 596.4 L2151.6 608.1 L2160.0 608.1 L2160.0 608.1 L2161.7 608.1 L2161.7 610.9 L2163.4 610.9 L2163.4 616.7 L2165.2 616.7 L2165.2 624.5 L2166.9 624.5 L2166.9 634.1 L2168.6 645.3 L2169.8 223.6 L2171.0 608.1 L2171.0 601.8 L2173.3 601.8 L2173.3 608.1 L2173.7 608.1 L2187.4 608.1 L2182.3 608.1 L2184.0 608.1 L2184.0 610.9 L2185.8 610.9 L2185.8 616.7 L2187.5 616.7 L2187.5 624.5 L2189.2 624.5 L2189.2 634.1 L2190.9 645.3 L2192.1 296.0 L2193.3 608.1 L2193.3 601.8 L2195.6 601.8 L2195.6 608.1 L2195.2 600.3 L2210.9 608.1 L2207.4 608.1 L2209.1 608.1 L2209.1 610.9 L2210.8 610.9 L2210.8 616.7 L2212.5 616.7 L2212.5 624.5 L2214.3 624.5 L2214.3 634.1 L2216.0 645.3 L2217.2 310.5 L2218.3 608.1 L2218.3 601.8 L2220.7 601.8 L2220.7 608.1 L2220.7 608.1 L2242.2 608.1 L2241.8 608.1 L2243.6 608.1 L2243.6 611.5 L2245.3 611.5 L2245.3 618.5 L2247.0 618.5 L2247.0 628.0 L2248.7 628.0 L2248.7 639.6 L2250.4 653.1 L2251.6 216.6 L2252.8 608.1 L2252.8 601.8 L2255.1 601.8 L2255.1 608.1 L2254.8 608.1 L2279.4 608.1 L2280.2 608.1 L2281.9 608.1 L2281.9 611.5 L2283.6 611.5 L2283.6 618.5 L2285.4 618.5 L2285.4 628.0 L2287.1 628.0 L2287.1 639.6 L2288.8 653.1 L2290.0 216.6 L2291.2 608.1 L2291.2 601.8 L2293.5 601.8 L2293.5 608.1 L2293.9 596.4 L2328.4 594.4 L2332.7 594.4 L2334.4 594.4 L2334.4 596.6 L2336.1 596.6 L2336.1 601.2 L2337.8 601.2 L2337.8 607.4 L2339.6 607.4 L2339.6 614.9 L2341.3 623.8 L2342.5 245.1 L2343.6 594.4 L2343.6 588.1 L2346.0 588.1 L2346.0 594.4 L2346.0 592.4 L2349.9 584.6 L2355.8 578.7 L2393.0 578.7 L2390.6 578.7 L2392.3 578.7 L2392.3 582.6 L2394.1 582.6 L2394.1 590.5 L2395.8 590.5 L2395.8 601.2 L2397.5 601.2 L2397.5 614.4 L2399.2 629.6 L2400.4 223.6 L2401.6 578.7 L2401.6 572.5 L2403.9 572.5 L2403.9 578.7 L2403.5 600.3 L2410.6 604.2 L2407.5 604.2 L2409.2 604.2 L2409.2 607.3 L2410.9 607.3 L2410.9 613.7 L2412.6 613.7 L2412.6 622.3 L2414.3 622.3 L2414.3 633.0 L2416.1 645.3 L2417.2 231.0 L2418.4 604.2 L2418.4 597.9 L2420.8 597.9 L2420.8 604.2 L2421.6 608.1 L2436.0 608.1 L2430.9 608.1 L2432.7 608.1 L2432.7 609.7 L2434.4 609.7 L2434.4 613.1 L2436.1 613.1 L2436.1 617.6 L2437.8 617.6 L2437.8 623.2 L2439.6 629.6 L2440.7 216.6 L2441.9 608.1 L2441.9 601.8 L2444.3 601.8 L2444.3 608.1 L2443.9 608.1 L2457.6 612.0 L2459.5 612.0 L2461.3 612.0 L2461.3 615.2 L2463.0 615.2 L2463.0 621.5 L2464.7 621.5 L2464.7 630.2 L2466.4 630.2 L2466.4 640.8 L2468.1 653.1 L2469.3 289.0 L2470.5 612.0 L2470.5 605.8 L2472.8 605.8 L2472.8 612.0 L2473.2 627.7 L2490.9 625.7 L2485.4 625.7 L2487.1 625.7 L2487.1 628.3 L2488.8 628.3 L2488.8 633.4 L2490.5 633.4 L2490.5 640.4 L2492.3 640.4 L2492.3 649.0 L2494.0 659.0 L2495.2 223.6 L2496.3 625.7 L2496.3 619.5 L2498.7 619.5 L2498.7 625.7 L2498.7 623.8 L2512.4 623.8 L2507.7 623.8 L2509.4 623.8 L2509.4 626.0 L2511.1 626.0 L2511.1 630.5 L2512.9 630.5 L2512.9 636.7 L2514.6 636.7 L2514.6 644.3 L2516.3 653.1 L2517.5 223.6 L2518.7 623.8 L2518.7 617.5 L2521.0 617.5 L2521.0 623.8 L2520.2 617.9 L2532.0 619.9 L2526.9 619.9 L2528.6 619.9 L2528.6 622.4 L2530.3 622.4 L2530.3 627.5 L2532.0 627.5 L2532.0 634.5 L2533.8 634.5 L2533.8 643.1 L2535.5 653.1 L2536.7 231.0 L2537.8 619.9 L2537.8 613.6 L2540.2 613.6 L2540.2 619.9 L2539.8 623.8 L2551.5 623.8 L2545.7 623.8 L2547.4 623.8 L2547.4 626.4 L2549.1 626.4 L2549.1 631.9 L2550.8 631.9 L2550.8 639.3 L2552.6 639.3 L2552.6 648.4 L2554.3 659.0 L2555.5 289.0 L2556.6 623.8 L2556.6 617.5 L2559.0 617.5 L2559.0 623.8 L2559.4 623.8 L2571.1 623.8 L2567.6 623.8 L2569.3 623.8 L2569.3 626.4 L2571.0 626.4 L2571.0 631.9 L2572.8 631.9 L2572.8 639.3 L2574.5 639.3 L2574.5 648.4 L2576.2 659.0 L2577.4 289.0 L2578.6 623.8 L2578.6 617.5 L2580.9 617.5 L2580.9 623.8 L2580.9 619.9 L2592.7 615.9 L2587.6 615.9 L2589.3 615.9 L2589.3 617.0 L2591.0 617.0 L2591.0 619.1 L2592.7 619.1 L2592.7 622.0 L2594.5 622.0 L2594.5 625.5 L2596.2 629.6 L2597.4 216.6 L2598.5 615.9 L2598.5 609.7 L2600.9 609.7 L2600.9 615.9 L2600.5 600.3 L2629.9 594.4 L2631.8 594.4 L2633.5 594.4 L2633.5 596.6 L2635.3 596.6 L2635.3 601.2 L2637.0 601.2 L2637.0 607.4 L2638.7 607.4 L2638.7 614.9 L2640.4 623.8 L2641.6 231.0 L2642.8 594.4 L2642.8 588.1 L2645.1 588.1 L2645.1 594.4 L2644.7 565.0 L2649.4 584.6 L2659.8 584.6 L2662.5 541.5 L2664.1 592.4 L2679.4 596.4 L2682.1 596.4 L2683.0 596.4 L2683.0 598.4 L2684.0 598.4 L2684.0 602.7 L2684.9 602.7 L2684.9 608.5 L2685.9 608.5 L2685.9 615.5 L2686.8 623.8 L2688.0 289.0 L2689.2 596.4 L2689.2 590.1 L2691.5 590.1 L2691.5 596.4 L2691.1 600.3 L2696.2 578.7 L2698.9 592.4 L2714.6 592.4 L2717.3 549.4 L2715.4 549.4 L2716.3 549.4 L2716.3 555.5 L2717.3 555.5 L2717.3 567.9 L2718.2 567.9 L2718.2 584.8 L2719.1 584.8 L2719.1 605.5 L2720.1 629.6 L2721.3 317.6 L2722.4 549.4 L2722.4 543.1 L2724.8 543.1 L2724.8 549.4 L2724.4 608.1 L2730.3 608.1 L2730.7 608.1 L2731.6 608.1 L2731.6 609.7 L2732.5 609.7 L2732.5 613.1 L2733.5 613.1 L2733.5 617.6 L2734.4 617.6 L2734.4 623.2 L2735.4 629.6 L2736.5 296.0 L2737.7 608.1 L2737.7 601.8 L2740.1 601.8 L2740.1 608.1 L2740.1 604.2 L2745.9 608.1 L2747.5 608.1 L2748.4 608.1 L2748.4 610.9 L2749.4 610.9 L2749.4 616.7 L2750.3 616.7 L2750.3 624.5 L2751.3 624.5 L2751.3 634.1 L2752.2 645.3 L2753.4 296.0 L2754.5 608.1 L2754.5 601.8 L2756.9 601.8 L2756.9 608.1 L2757.7 600.3 L2767.5 600.3 L2768.6 600.3 L2769.6 600.3 L2769.6 603.7 L2770.5 603.7 L2770.5 610.7 L2771.5 610.7 L2771.5 620.2 L2772.4 620.2 L2772.4 631.8 L2773.3 645.3 L2774.5 296.0 L2775.7 600.3 L2775.7 594.0 L2778.0 594.0 L2778.0 600.3 L2777.3 592.4 L2789.0 592.4 L2790.2 592.4 L2791.1 592.4 L2791.1 595.3 L2792.1 595.3 L2792.1 601.0 L2793.0 601.0 L2793.0 608.9 L2793.9 608.9 L2793.9 618.5 L2794.9 629.6 L2796.0 231.0 L2797.2 592.4 L2797.2 586.2 L2799.6 586.2 L2799.6 592.4 L2798.8 592.4 L2810.5 592.4 L2811.7 592.4 L2812.6 592.4 L2812.6 594.8 L2813.6 594.8 L2813.6 599.7 L2814.5 599.7 L2814.5 606.3 L2815.5 606.3 L2815.5 614.4 L2816.4 623.8 L2817.6 310.5 L2818.8 592.4 L2818.8 586.2 L2821.1 586.2 L2821.1 592.4 L2823.5 592.4 L2824.4 592.4 L2824.4 595.3 L2825.3 595.3 L2825.3 601.0 L2826.3 601.0 L2826.3 608.9 L2827.2 608.9 L2827.2 618.5 L2828.2 629.6 L2829.3 281.9 L2830.5 592.4 L2830.5 586.2 L2832.9 586.2 L2832.9 592.4 L2832.5 592.4 L2833.4 592.4 L2833.4 595.3 L2834.3 595.3 L2834.3 601.0 L2835.3 601.0 L2835.3 608.9 L2836.2 608.9 L2836.2 618.5 L2837.2 629.6 L2838.3 281.9 L2839.5 592.4 L2839.5 586.2 L2841.9 586.2 L2841.9 592.4 L2841.9 592.4 L2842.8 592.4 L2842.8 595.3 L2843.7 595.3 L2843.7 601.0 L2844.7 601.0 L2844.7 608.9 L2845.6 608.9 L2845.6 618.5 L2846.6 629.6 L2847.7 317.6 L2848.9 592.4 L2848.9 586.2 L2851.3 586.2 L2851.3 592.4 L2850.5 592.4 L2851.4 592.4 L2851.4 597.1 L2852.3 597.1 L2852.3 606.5 L2853.3 606.5 L2853.3 619.2 L2854.2 619.2 L2854.2 634.9 L2855.2 653.1 L2856.3 339.9 L2857.5 592.4 L2857.5 586.2 L2859.9 586.2 L2859.9 592.4 L2859.5 592.4 L2860.4 592.4 L2860.4 595.9 L2861.4 595.9 L2861.4 602.8 L2862.3 602.8 L2862.3 612.3 L2863.2 612.3 L2863.2 624.0 L2864.2 637.5 L2865.3 317.6 L2866.5 592.4 L2866.5 586.2 L2868.9 586.2 L2868.9 592.4 L2868.1 592.4 L2869.0 592.4 L2869.0 597.1 L2870.0 597.1 L2870.0 606.5 L2870.9 606.5 L2870.9 619.2 L2871.8 619.2 L2871.8 634.9 L2872.8 653.1 L2874.0 274.5 L2875.1 592.4 L2875.1 586.2 L2877.5 586.2 L2877.5 592.4 L2876.7 592.4 L2877.6 592.4 L2877.6 596.5 L2878.6 596.5 L2878.6 604.6 L2879.5 604.6 L2879.5 615.8 L2880.5 615.8 L2880.5 629.4 L2881.4 645.3 L2882.6 310.5 L2883.8 592.4 L2883.8 586.2 L2886.1 586.2 L2886.1 592.4 L2884.9 588.5 L2886.1 588.5 L2887.0 588.5 L2887.0 591.7 L2888.0 591.7 L2888.0 598.0 L2888.9 598.0 L2888.9 606.7 L2889.9 606.7 L2889.9 617.3 L2890.8 629.6 L2892.0 274.5 L2893.1 588.5 L2893.1 582.3 L2895.5 582.3 L2895.5 588.5 L2895.5 588.5 L2896.4 588.5 L2896.4 591.7 L2897.4 591.7 L2897.4 598.0 L2898.3 598.0 L2898.3 606.7 L2899.3 606.7 L2899.3 617.3 L2900.2 629.6 L2901.4 289.0 L2902.5 588.5 L2902.5 582.3 L2904.9 582.3 L2904.9 588.5 L2906.5 588.5 L2907.4 588.5 L2907.4 591.7 L2908.3 591.7 L2908.3 598.0 L2909.3 598.0 L2909.3 606.7 L2910.2 606.7 L2910.2 617.3 L2911.2 629.6 L2912.3 310.5 L2913.5 588.5 L2913.5 582.3 L2915.9 582.3 L2915.9 588.5 L2916.2 584.6 L2920.6 584.6 L2921.5 584.6 L2921.5 588.0 L2922.4 588.0 L2922.4 595.0 L2923.4 595.0 L2923.4 604.5 L2924.3 604.5 L2924.3 616.1 L2925.3 629.6 L2926.4 296.0 L2927.6 584.6 L2927.6 578.3 L2930.0 578.3 L2930.0 584.6 L2938.6 584.6 L2939.5 584.6 L2939.5 587.0 L2940.4 587.0 L2940.4 591.8 L2941.4 591.8 L2941.4 598.4 L2942.3 598.4 L2942.3 606.5 L2943.3 615.9 L2944.4 289.0 L2945.6 584.6 L2945.6 578.3 L2948.0 578.3 L2948.0 584.6 L2947.6 570.9 L2953.4 570.9 L2955.0 533.7 L2956.6 580.7 L2956.6 580.7 L2957.5 580.7 L2957.5 585.0 L2958.5 585.0 L2958.5 593.8 L2959.4 593.8 L2959.4 605.8 L2960.3 605.8 L2960.3 620.4 L2961.3 637.5 L2962.5 339.9 L2963.6 580.7 L2963.6 574.4 L2966.0 574.4 L2966.0 580.7 L2967.9 580.7 L2968.9 580.7 L2968.9 584.4 L2969.8 584.4 L2969.8 592.0 L2970.8 592.0 L2970.8 602.3 L2971.7 602.3 L2971.7 614.9 L2972.6 629.6 L2973.8 325.0 L2975.0 580.7 L2975.0 574.4 L2977.3 574.4 L2977.3 580.7 L2979.7 580.7 L2980.6 580.7 L2980.6 584.4 L2981.6 584.4 L2981.6 592.0 L2982.5 592.0 L2982.5 602.3 L2983.4 602.3 L2983.4 614.9 L2984.4 629.6 L2985.6 267.5 L2986.7 580.7 L2986.7 574.4 L2989.1 574.4 L2989.1 580.7 L2991.0 580.7 L2992.0 580.7 L2992.0 584.4 L2992.9 584.4 L2992.9 592.0 L2993.9 592.0 L2993.9 602.3 L2994.8 602.3 L2994.8 614.9 L2995.7 629.6 L2996.9 267.5 L2998.1 580.7 L2998.1 574.4 L3000.4 574.4 L3000.4 580.7 L3002.0 580.7 L3002.9 580.7 L3002.9 584.0 L3003.9 584.0 L3003.9 590.6 L3004.8 590.6 L3004.8 599.7 L3005.8 599.7 L3005.8 610.8 L3006.7 623.8 L3007.9 260.4 L3009.0 580.7 L3009.0 574.4 L3011.4 574.4 L3011.4 580.7 L3010.2 578.7 L3013.0 578.7 L3013.9 578.7 L3013.9 582.2 L3014.8 582.2 L3014.8 589.1 L3015.8 589.1 L3015.8 598.6 L3016.7 598.6 L3016.7 610.2 L3017.7 623.8 L3018.8 260.4 L3020.0 578.7 L3020.0 572.5 L3022.4 572.5 L3022.4 578.7 L3023.9 578.7 L3024.9 578.7 L3024.9 582.2 L3025.8 582.2 L3025.8 589.1 L3026.7 589.1 L3026.7 598.6 L3027.7 598.6 L3027.7 610.2 L3028.6 623.8 L3029.8 252.6 L3031.0 578.7 L3031.0 572.5 L3033.3 572.5 L3033.3 578.7 L3031.8 574.8 L3035.3 574.8 L3036.2 574.8 L3036.2 579.0 L3037.2 579.0 L3037.2 587.5 L3038.1 587.5 L3038.1 599.0 L3039.0 599.0 L3039.0 613.2 L3040.0 629.6 L3041.2 252.6 L3042.3 574.8 L3042.3 568.6 L3044.7 568.6 L3044.7 574.8 L3044.3 574.8 L3045.2 574.8 L3045.2 578.6 L3046.2 578.6 L3046.2 586.1 L3047.1 586.1 L3047.1 596.4 L3048.0 596.4 L3048.0 609.1 L3049.0 623.8 L3050.2 252.6 L3051.3 574.8 L3051.3 568.6 L3053.7 568.6 L3053.7 574.8 L3054.5 574.8 L3055.4 574.8 L3055.4 578.6 L3056.3 578.6 L3056.3 586.1 L3057.3 586.1 L3057.3 596.4 L3058.2 596.4 L3058.2 609.1 L3059.2 623.8 L3060.3 252.6 L3061.5 574.8 L3061.5 568.6 L3063.9 568.6 L3063.9 574.8 L3063.5 574.8 L3064.4 574.8 L3064.4 579.0 L3065.3 579.0 L3065.3 587.5 L3066.3 587.5 L3066.3 599.0 L3067.2 599.0 L3067.2 613.2 L3068.2 629.6 L3069.3 260.4 L3070.5 574.8 L3070.5 568.6 L3072.9 568.6 L3072.9 574.8 L3072.1 574.8 L3073.0 574.8 L3073.0 578.6 L3074.0 578.6 L3074.0 586.1 L3074.9 586.1 L3074.9 596.4 L3075.8 596.4 L3075.8 609.1 L3076.8 623.8 L3078.0 260.4 L3079.1 574.8 L3079.1 568.6 L3081.5 568.6 L3081.5 574.8 L3080.7 574.8 L3081.6 574.8 L3081.6 579.0 L3082.6 579.0 L3082.6 587.5 L3083.5 587.5 L3083.5 599.0 L3084.5 599.0 L3084.5 613.2 L3085.4 629.6 L3086.6 252.6 L3087.7 574.8 L3087.7 568.6 L3090.1 568.6 L3090.1 574.8 L3089.3 574.8 L3090.3 574.8 L3090.3 579.0 L3091.2 579.0 L3091.2 587.5 L3092.1 587.5 L3092.1 599.0 L3093.1 599.0 L3093.1 613.2 L3094.0 629.6 L3095.2 252.6 L3096.4 574.8 L3096.4 568.6 L3098.7 568.6 L3098.7 574.8 L3096.4 580.7 L3097.5 580.7 L3098.5 580.7 L3098.5 585.6 L3099.4 585.6 L3099.4 595.6 L3100.4 595.6 L3100.4 609.2 L3101.3 609.2 L3101.3 625.9 L3102.2 645.3 L3103.4 260.4 L3104.6 580.7 L3104.6 574.4 L3106.9 574.4 L3106.9 580.7 L3106.5 580.7 L3107.5 580.7 L3107.5 585.0 L3108.4 585.0 L3108.4 593.8 L3109.4 593.8 L3109.4 605.8 L3110.3 605.8 L3110.3 620.4 L3111.2 637.5 L3112.4 260.4 L3113.6 580.7 L3113.6 574.4 L3115.9 574.4 L3115.9 580.7 L3115.9 580.7 L3116.9 580.7 L3116.9 584.4 L3117.8 584.4 L3117.8 592.0 L3118.8 592.0 L3118.8 602.3 L3119.7 602.3 L3119.7 614.9 L3120.6 629.6 L3121.8 252.6 L3123.0 580.7 L3123.0 574.4 L3125.3 574.4 L3125.3 580.7 L3124.9 580.7 L3125.9 580.7 L3125.9 584.4 L3126.8 584.4 L3126.8 592.0 L3127.8 592.0 L3127.8 602.3 L3128.7 602.3 L3128.7 614.9 L3129.6 629.6 L3130.8 260.4 L3132.0 580.7 L3132.0 574.4 L3134.3 574.4 L3134.3 580.7 L3135.5 580.7 L3136.5 580.7 L3136.5 584.4 L3137.4 584.4 L3137.4 592.0 L3138.3 592.0 L3138.3 602.3 L3139.3 602.3 L3139.3 614.9 L3140.2 629.6 L3141.4 252.6 L3142.6 580.7 L3142.6 574.4 L3144.9 574.4 L3144.9 580.7 L3144.5 580.7 L3145.5 580.7 L3145.5 584.4 L3146.4 584.4 L3146.4 592.0 L3147.3 592.0 L3147.3 602.3 L3148.3 602.3 L3148.3 614.9 L3149.2 629.6 L3150.4 252.6 L3151.6 580.7 L3151.6 574.4 L3153.9 574.4 L3153.9 580.7 L3153.5 580.7 L3154.5 580.7 L3154.5 584.4 L3155.4 584.4 L3155.4 592.0 L3156.3 592.0 L3156.3 602.3 L3157.3 602.3 L3157.3 614.9 L3158.2 629.6 L3159.4 252.6 L3160.6 580.7 L3160.6 574.4 L3162.9 574.4 L3162.9 580.7 L3161.0 584.6" fill="none" stroke="#4878a6" stroke-width="3" stroke-linejoin="miter"/>
<path d="M116.9 1272.1 L128.9 1272.1 L128.9 1285.2 L140.9 1285.2 L140.9 1289.0 L154.0 1289.0 L154.0 1297.5 L166.7 1297.5 L166.7 1253.2 L173.5 1253.2 L173.5 1248.1 L180.4 1248.1 L180.4 1251.2" fill="none" stroke="#2f4b66" stroke-width="3" stroke-linejoin="miter"/>
<path d="M180.4 1251.2 L183.1 1251.2 L183.1 1264.2 L188.3 1264.2 L188.3 1240.9 L190.7 1240.9 L190.7 1248.1 L196.5 1248.1 L196.5 1233.3 L199.3 1233.3 L199.3 1220.3 L202.7 1220.3 L204.4 1209.3 L206.8 1209.3 L206.8 1214.4 L211.3 1214.4 L213.0 1225.8 L215.8 1231.6 L219.2 1231.6 L219.9 1229.2 L223.3 1229.2 L223.3 1224.7 L227.8 1224.7 L227.8 1228.2 L233.6 1228.2 L234.3 1240.2 L238.8 1250.5 L241.5 1250.5 L242.2 1245.3 L245.6 1240.2 L247.4 1231.6 L252.5 1229.2 L253.5 1221.3 L257.7 1221.3 L258.4 1209.3 L263.8 1207.6 L268.7 1207.6 L268.7 1160.5 L270.7 1160.5 L270.7 1219.6 L274.8 1224.7 L280.0 1224.7 L281.7 1248.8 L288.6 1248.8 L291.3 1242.9 L295.4 1246.4 L300.6 1247.1 L304.0 1253.2 L308.5 1253.2 L310.2 1241.9 L314.3 1241.9 L315.0 1228.2 L320.2 1228.2 L321.2 1207.6 L326.3 1207.6 L327.0 1199.0 L334.9 1199.0 L335.6 1181.8 L348.7 1181.8 L349.4 1208.6 L353.8 1208.6 L355.5 1205.9 L360.7 1211.0 L365.8 1214.4 L366.9 1222.3 L369.3 1214.4 L373.4 1214.4 L373.4 1230.6 L383.0 1230.6 L384.7 1236.8 L387.5 1229.2 L391.6 1229.2 L391.6 1213.4 L396.7 1213.4 L398.5 1216.8 L401.2 1207.6 L409.8 1207.6 L409.8 1235.0 L415.6 1233.3 L417.3 1238.5 L422.5 1240.2 L424.2 1241.9 L431.1 1241.9 L432.8 1245.3 L435.5 1255.6 L439.7 1255.6 L441.4 1253.9 L446.5 1253.9 L447.2 1250.5 L456.8 1250.5 L457.5 1253.9 L465.4 1253.9 L466.5 1247.1 L470.6 1248.8 L474.0 1250.5 L475.7 1253.9 L479.2 1259.1 L482.6 1259.1 L484.3 1249.8 L501.5 1249.8 L503.2 1236.8 L507.7 1229.9 L511.8 1229.2 L514.5 1235.0 L516.9 1246.4 L523.8 1247.7 L532.4 1248.8 L534.1 1253.9 L537.5 1250.5 L543.4 1252.2 L547.8 1255.6 L549.6 1257.4 L559.9 1255.6 L561.6 1264.2 L565.0 1260.8 L570.2 1262.5 L578.8 1264.2 L580.5 1253.9 L583.9 1250.5 L585.6 1236.8 L588.0 1245.3 L592.5 1243.6 L601.1 1243.6 L602.1 1228.2 L610.0 1228.2 L612.0 1228.2 L613.0 1204.1 L615.5 1204.1 L617.2 1212.7 L620.6 1205.9 L623.4 1212.7 L625.8 1240.2 L629.2 1240.2 L630.2 1230.6 L636.1 1230.6 L637.1 1240.2 L639.5 1249.8 L646.4 1249.8 L648.1 1246.4 L653.2 1245.3 L654.3 1236.8 L657.7 1239.5 L660.1 1235.0 L670.4 1235.0 L670.4 1250.5 L694.4 1250.5 L694.4 1278.7 L705.8 1278.7 L708.2 1289.3 L715.0 1289.3 L716.1 1317.5 L718.5 1295.1 L720.9 1320.9 L722.9 1296.9 L726.4 1296.9 L727.7 1319.2 L729.8 1286.6 L734.6 1286.6 L736.3 1274.5 L740.8 1267.7 L741.8 1254.6 L743.5 1283.1 L749.4 1281.4 L750.4 1253.2 L753.8 1253.9 L755.2 1278.0 L758.0 1269.4 L759.7 1286.6 L763.1 1246.4 L768.3 1249.8 L770.0 1287.6 L776.9 1286.6 L785.4 1285.9 L788.2 1264.2 L789.6 1252.2 L794.0 1248.8 L796.4 1240.9 L802.6 1243.6 L809.5 1245.3 L812.9 1253.9 L819.8 1253.9 L822.5 1250.5 L824.9 1252.2 L827.3 1260.1 L832.8 1260.8 L833.5 1268.4 L840.4 1268.4 L843.1 1260.8 L845.5 1271.1 L850.0 1272.8 L851.4 1281.4 L853.4 1296.9 L858.2 1295.1 L862.7 1282.1 L863.7 1274.5 L867.9 1274.5 L868.5 1283.1 L883.3 1283.1 L886.7 1276.2 L888.5 1271.1 L891.9 1271.1 L892.6 1264.9 L899.5 1264.9 L899.5 1276.2 L903.9 1274.5 L904.9 1264.2 L909.1 1264.2 L910.8 1271.1 L912.5 1257.4 L916.6 1255.6 L928.0 1255.6 L929.7 1252.2 L932.4 1262.5 L934.8 1250.5 L938.3 1255.6 L939.3 1270.4 L940.7 1241.9 L945.1 1236.8 L946.8 1240.2 L950.3 1240.2 L951.0 1262.5 L957.1 1262.5 L957.8 1233.3 L959.9 1202.4 L965.7 1199.7 L970.2 1192.1 L972.6 1187.0 L974.3 1192.1 L977.7 1192.8 L978.4 1199.7 L986.3 1200.7 L987.4 1194.9 L989.8 1200.7 L991.5 1211.0 L994.2 1204.1 L998.4 1210.0 L1006.9 1207.6 L1008.0 1241.9 L1010.4 1254.6 L1013.8 1253.2 L1015.5 1241.9 L1019.0 1238.5 L1021.7 1230.6 L1032.0 1230.6 L1034.4 1240.2 L1036.1 1250.5 L1041.3 1252.2 L1043.7 1258.0 L1046.4 1248.8 L1051.6 1242.9 L1056.0 1219.6 L1060.2 1204.1 L1064.3 1204.1 L1067.0 1207.6 L1069.8 1217.9 L1076.6 1214.4 L1078.0 1225.8 L1087.6 1225.8 L1088.3 1221.3 L1090.4 1236.1 L1093.8 1236.1 L1094.5 1257.4 L1100.0 1257.4 L1100.0 1257.4 L1102.0 1249.8 L1109.9 1249.8 L1109.9 1211.0 L1115.8 1212.0 L1117.5 1222.3 L1120.9 1223.0 L1121.6 1235.0 L1124.3 1226.5 L1127.1 1236.1 L1131.2 1236.8 L1131.9 1252.2 L1134.0 1262.5 L1140.8 1262.5 L1143.2 1272.8 L1146.7 1260.1 L1149.1 1271.1 L1151.8 1260.8 L1155.2 1261.5 L1157.0 1271.1 L1158.7 1260.1 L1160.4 1276.2 L1162.1 1253.9 L1165.5 1252.2 L1168.3 1257.4 L1170.7 1259.1 L1172.4 1268.4 L1175.9 1271.1 L1184.4 1271.1 L1186.2 1278.0 L1187.9 1270.4 L1194.7 1271.1 L1198.2 1281.4 L1201.6 1293.4 L1204.0 1268.4 L1208.5 1276.2 L1211.9 1278.7 L1218.8 1278.7 L1219.8 1253.9 L1222.2 1240.9 L1225.6 1240.9 L1226.7 1214.4 L1234.2 1214.4 L1234.9 1225.8 L1235.9 1212.0 L1240.4 1209.3 L1241.1 1204.1 L1243.8 1205.9 L1248.0 1210.0 L1249.7 1221.3 L1254.1 1238.5 L1255.5 1144.0 L1259.0 1144.0 L1260.0 1157.1 L1263.4 1164.6 L1265.1 1211.0 L1268.6 1216.2 L1270.3 1259.1 L1273.7 1248.8 L1276.1 1326.0 L1278.2 1381.0 L1280.6 1360.4 L1284.0 1346.6 L1287.5 1336.3 L1289.2 1360.4 L1292.6 1360.4 L1296.0 1374.1 L1298.8 1370.7 L1301.2 1384.4 L1304.6 1393.0 L1307.0 1382.7 L1313.2 1384.4 L1316.6 1370.7 L1323.5 1363.1 L1331.1 1363.1 L1332.1 1375.8 L1335.5 1382.7 L1340.0 1400.9 L1345.8 1386.1 L1355.1 1386.1 L1356.1 1398.8 L1364.7 1398.8 L1366.4 1414.6 L1369.9 1389.6 L1377.8 1387.2 L1380.2 1405.0 L1385.3 1407.8 L1387.0 1415.3 L1390.5 1433.2 L1393.9 1433.2 L1396.3 1413.6 L1400.8 1413.6 L1401.8 1449.0 L1405.9 1449.0 L1413.5 1446.9 L1414.5 1439.4 L1424.8 1439.4 L1425.9 1472.0 L1428.3 1482.3 L1430.7 1484.0 L1432.7 1520.1 L1436.8 1508.0 L1439.6 1398.2 L1441.0 1391.3 L1442.0 1219.6 L1443.7 1477.1 L1445.4 1504.6 L1447.1 1470.3 L1448.9 1509.8 L1452.3 1499.5 L1455.7 1489.2 L1456.8 1547.5 L1460.9 1551.0 L1462.6 1547.5 L1469.5 1547.5 L1472.9 1575.0 L1481.5 1568.1 L1482.5 1526.9 L1484.2 1434.2 L1485.6 1535.5 L1488.4 1520.1 L1491.1 1530.4 L1494.5 1530.4 L1495.2 1507.4 L1498.0 1511.5 L1505.5 1511.5 L1507.2 1482.3 L1515.8 1482.3 L1517.5 1492.6 L1526.1 1489.2 L1527.8 1463.4 L1534.7 1463.4 L1536.4 1478.9 L1539.9 1483.3 L1550.2 1483.3 L1551.9 1456.5 L1562.2 1456.5 L1563.9 1453.8 L1574.2 1453.8 L1574.9 1463.4 L1579.4 1463.4 L1580.4 1446.2 L1586.2 1445.5 L1587.9 1437.7 L1590.0 1437.7 L1590.0 1437.7 L1597.2 1437.7 L1598.9 1452.4 L1606.8 1452.4 L1610.2 1462.7 L1620.5 1462.7 L1621.2 1450.4 L1627.4 1450.4 L1628.1 1459.3 L1643.5 1459.3 L1643.5 1422.9 L1648.0 1422.9 L1648.7 1412.6 L1653.8 1412.6 L1654.9 1421.5 L1664.1 1421.5 L1665.9 1408.5 L1670.0 1408.5 L1671.0 1414.6 L1676.8 1414.6 L1677.9 1391.3 L1687.1 1391.3 L1688.2 1369.0 L1693.3 1370.7 L1694.4 1377.6 L1700.2 1377.6 L1700.9 1391.3 L1705.3 1391.3 L1706.4 1400.9 L1709.8 1400.9 L1710.5 1431.8 L1717.4 1431.8 L1718.0 1423.9 L1722.5 1423.9 L1723.5 1393.0 L1734.5 1393.0 L1735.2 1399.9 L1738.7 1399.9 L1739.7 1394.7 L1747.6 1394.7 L1748.3 1411.9 L1754.5 1412.6 L1755.8 1423.9 L1759.3 1425.6 L1760.3 1432.5 L1763.7 1434.2 L1769.6 1434.2 L1770.6 1460.0 L1773.0 1466.8 L1777.5 1465.1 L1778.5 1458.3 L1782.6 1451.4 L1785.4 1454.8 L1791.2 1454.8 L1792.2 1461.7 L1794.6 1449.0 L1798.1 1450.4 L1799.8 1460.0 L1802.5 1460.0 L1803.9 1454.8 L1809.4 1454.8 L1813.5 1446.2 L1817.0 1440.1 L1821.1 1441.1 L1827.3 1444.5 L1827.9 1454.8 L1830.7 1446.9 L1839.3 1446.9 L1841.0 1462.7 L1844.4 1466.2 L1850.6 1463.4 L1858.2 1462.7 L1858.8 1485.7 L1863.3 1489.2 L1866.7 1482.3 L1867.8 1474.4 L1871.9 1475.4 L1874.6 1478.9 L1883.9 1478.9 L1884.9 1484.0 L1895.9 1484.0 L1897.7 1458.3 L1901.1 1465.1 L1903.5 1453.1 L1908.0 1451.4 L1909.0 1442.8 L1921.7 1442.8 L1923.4 1429.1 L1932.0 1429.1 L1935.4 1432.5 L1942.3 1427.3 L1950.9 1427.3 L1952.6 1419.5 L1957.7 1416.0 L1961.2 1409.1 L1968.0 1408.5 L1973.2 1410.2 L1981.1 1410.2 L1982.5 1384.4 L1986.9 1379.3 L1989.3 1360.4 L1993.8 1360.4 L1993.8 1322.6 L1997.2 1322.6 L1998.3 1300.3 L2003.1 1300.3 L2004.1 1283.1 L2008.6 1284.8 L2011.0 1295.1 L2018.9 1296.9 L2021.3 1307.2 L2023.0 1319.9 L2029.9 1319.9 L2031.6 1224.7 L2033.3 1317.5 L2034.0 1341.5 L2043.6 1341.5 L2046.3 1350.1 L2052.2 1357.0 L2055.6 1363.8 L2058.0 1374.1 L2062.5 1382.7 L2063.5 1422.2 L2067.6 1432.5 L2073.8 1434.2 L2074.5 1444.5 L2080.0 1451.4 L2085.5 1460.0 L2088.9 1460.0 L2091.3 1453.1 L2095.8 1451.4 L2098.2 1444.5 L2101.6 1441.1 L2105.0 1439.4 L2106.1 1433.2 L2110.5 1433.2 L2111.9 1425.6 L2114.0 1433.2 L2116.4 1436.6 L2120.8 1435.9 L2122.2 1420.5 L2126.7 1422.2 L2129.1 1421.2 L2137.0 1421.2 L2137.0 1461.7 L2138.7 1454.8 L2140.4 1470.3 L2142.1 1453.1 L2144.9 1454.8 L2146.2 1450.4 L2148.3 1473.7 L2150.7 1463.4 L2153.1 1462.7 L2154.1 1448.0 L2159.3 1448.0 L2159.3 1400.9 L2169.6 1399.9 L2170.3 1416.0 L2173.0 1418.8 L2173.7 1435.9 L2178.2 1435.9 L2179.2 1411.9 L2180.6 1391.3 L2184.0 1391.3 L2185.0 1399.9 L2191.9 1400.9 L2193.6 1414.6 L2202.2 1415.3 L2214.2 1415.3 L2217.0 1431.8 L2218.4 1442.1 L2223.8 1442.1 L2226.2 1458.3 L2229.7 1460.0 L2231.4 1475.4 L2234.8 1460.0 L2237.6 1468.6 L2240.0 1460.7 L2245.8 1460.7 L2246.9 1448.0 L2258.2 1448.0 L2259.6 1472.0 L2269.2 1472.0 L2269.9 1454.8 L2275.4 1453.8 L2281.2 1453.8 L2282.2 1473.7 L2287.0 1473.7 L2288.1 1454.8 L2292.5 1454.8 L2293.9 1472.0 L2296.6 1468.6 L2298.4 1466.2 L2303.5 1466.2 L2304.2 1485.7 L2306.3 1495.0 L2313.1 1495.0 L2313.8 1512.2 L2316.6 1530.4 L2317.9 1557.8 L2322.4 1559.6 L2323.4 1567.1 L2328.2 1566.4 L2328.2 1549.9 L2338.5 1549.9 L2339.6 1566.4 L2344.7 1566.4 L2345.4 1559.6 L2349.9 1558.9 L2350.9 1545.8 L2361.9 1545.8 L2362.6 1558.9 L2372.2 1560.2 L2372.2 1549.9 L2382.5 1549.3 L2384.2 1539.0 L2385.9 1518.4 L2390.1 1514.9 L2391.1 1508.0 L2393.5 1515.6 L2394.5 1473.7 L2401.4 1472.0 L2405.9 1470.3 L2407.2 1460.7 L2410.0 1461.7 L2412.7 1468.6 L2415.1 1467.5 L2416.8 1478.9 L2421.0 1476.5 L2427.1 1470.3 L2435.7 1470.3 L2436.8 1490.2 L2440.2 1493.6 L2442.6 1500.5 L2448.4 1500.5 L2449.5 1516.6 L2454.6 1518.4 L2457.4 1510.8 L2470.1 1510.8 L2472.5 1508.0 L2478.7 1509.8 L2482.1 1507.4 L2488.3 1508.0 L2489.0 1488.1 L2495.8 1489.2 L2502.7 1489.2 L2503.4 1479.9 L2507.8 1478.9 L2516.4 1478.9 L2517.1 1458.3 L2523.3 1458.3 L2525.0 1450.4 L2530.2 1448.0 L2541.2 1450.4 L2542.2 1454.8 L2550.1 1454.8 L2551.5 1449.7 L2555.9 1449.7 L2557.0 1458.3 L2559.4 1448.0 L2562.8 1444.5 L2565.2 1430.8 L2570.0 1432.5 L2571.0 1433.3 L2572.0 1440.2 L2582.3 1440.2 L2583.4 1456.0 L2589.2 1456.0 L2589.2 1424.0 L2594.4 1425.7 L2595.0 1460.1 L2597.8 1460.8 L2598.5 1475.5 L2602.9 1477.3 L2604.0 1487.6 L2606.4 1489.3 L2607.4 1504.7 L2610.8 1506.5 L2611.5 1516.8 L2614.3 1518.5 L2615.7 1527.1 L2617.7 1539.1 L2621.1 1545.3 L2627.0 1546.0 L2628.7 1559.0 L2631.5 1570.0 L2634.9 1570.7 L2636.3 1578.6 L2641.8 1587.2 L2643.1 1594.1 L2648.6 1594.1 L2648.6 1562.5 L2650.0 1541.8 L2652.8 1540.8 L2654.5 1530.5 L2659.6 1530.5 L2661.3 1521.2 L2664.8 1520.2 L2665.8 1507.5 L2670.6 1507.5 L2671.6 1480.7 L2676.8 1480.0 L2677.5 1469.7 L2680.9 1469.7 L2682.0 1462.8 L2691.2 1461.8 L2692.3 1446.3 L2694.7 1454.9 L2702.6 1456.0 L2703.6 1444.6 L2706.0 1444.6 L2707.0 1424.0 L2711.8 1423.0 L2712.9 1415.4 L2716.3 1414.7 L2717.3 1410.3 L2723.2 1408.6 L2724.9 1404.4 L2727.6 1412.0 L2731.1 1412.0 L2731.8 1404.4 L2738.6 1403.4 L2742.8 1405.1 L2743.8 1416.1 L2747.2 1404.4 L2750.7 1416.1 L2750.7 1409.2 L2755.8 1409.2 L2756.5 1394.8 L2761.0 1394.8 L2762.0 1382.8 L2766.1 1381.8 L2766.8 1374.2 L2771.3 1374.2 L2773.0 1379.4 L2776.4 1380.4 L2778.1 1387.3 L2782.6 1386.2 L2785.0 1383.8 L2790.8 1382.8 L2793.6 1377.6 L2797.0 1378.3 L2801.2 1378.3 L2802.2 1397.6 L2813.5 1394.8 L2814.2 1381.8 L2817.0 1375.9 L2819.4 1374.9 L2820.4 1362.2 L2822.8 1362.2 L2822.8 1344.0 L2829.7 1343.3 L2829.7 1304.8 L2838.3 1303.8 L2838.9 1285.9 L2852.0 1285.9 L2852.7 1269.4 L2856.1 1268.4 L2857.1 1265.0 L2863.0 1265.0 L2864.0 1256.7 L2875.4 1256.7 L2876.0 1260.2 L2881.2 1260.2 L2882.2 1255.7 L2885.7 1255.7 L2887.0 1261.5 L2894.9 1262.6 L2900.1 1264.3 L2904.2 1267.7 L2906.3 1271.2 L2907.0 1276.3 L2909.7 1268.4 L2915.5 1268.4 L2915.5 1284.2 L2920.7 1284.9 L2921.4 1304.8 L2928.3 1302.8 L2931.7 1312.4 L2945.4 1312.4 L2946.5 1290.0 L2952.3 1289.0 L2953.3 1276.3 L2954.4 1251.2 L2961.2 1251.2 L2961.9 1258.1 L2972.9 1257.4 L2973.9 1252.3 L2978.4 1253.3 L2982.5 1254.7 L2988.7 1254.0 L2991.1 1252.3 L2998.0 1252.3 L2999.0 1245.4 L3006.6 1244.4 L3008.3 1242.0 L3020.3 1242.0 L3022.0 1245.4 L3027.2 1245.4 L3028.9 1242.0 L3034.1 1242.0 L3034.8 1247.1 L3044.4 1247.1 L3044.4 1223.1 L3054.7 1223.1 L3056.4 1228.2 L3068.4 1228.2 L3069.1 1220.3 L3074.6 1219.6 L3075.3 1213.4 L3080.4 1213.4 L3081.5 1221.3 L3090.7 1223.1 L3091.8 1234.1 L3097.6 1234.1 L3098.6 1245.4 L3102.8 1247.1 L3103.5 1250.5 L3109.6 1250.5 L3110.3 1259.1 L3114.8 1262.6 L3118.2 1265.0 L3128.5 1267.0 L3130.3 1268.4 L3137.8 1268.4 L3138.8 1274.6 L3145.7 1275.3 L3146.7 1284.2 L3149.1 1279.7 L3156.0 1279.7 L3157.7 1285.6 L3159.5 1287.3" fill="none" stroke="#4878a6" stroke-width="3" stroke-linejoin="miter"/>
</svg>
</body></html>
